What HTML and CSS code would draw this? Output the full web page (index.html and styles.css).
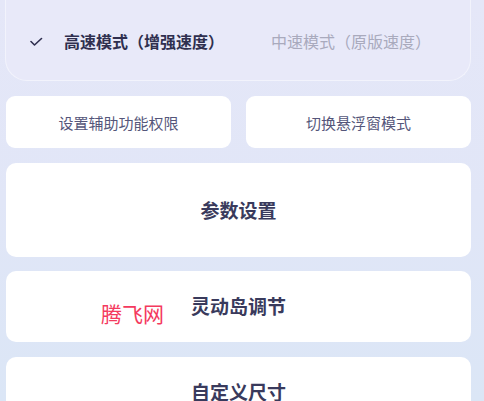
FILE: index.html
```html
<!DOCTYPE html>
<html lang="zh-CN">
<head>
<meta charset="utf-8">
<title>设置</title>
<link rel="stylesheet" href="styles.css">
</head>
<body>
<div class="page">
  <div class="mode-card">
    <div class="mode-row">
      <div class="mode-item active">
        <svg class="check" width="14" height="10" viewBox="0 0 14 10"><path d="M1 4.5 L4.5 8 L11.5 1.5" fill="none" stroke="#2f2f4f" stroke-width="1.6" stroke-linecap="round" stroke-linejoin="round"/></svg>
        <span>高速模式（增强速度）</span>
      </div>
      <div class="mode-item inactive"><span>中速模式（原版速度）</span></div>
    </div>
  </div>
  <div class="btn-row">
    <div class="btn">设置辅助功能权限</div>
    <div class="btn">切换悬浮窗模式</div>
  </div>
  <div class="card card-tall">参数设置</div>
  <div class="card card-mid">灵动岛调节<span class="watermark">腾飞网</span></div>
  <div class="card card-last">自定义尺寸</div>
</div>
</body>
</html>
```

FILE: styles.css
```css
html, body {
  margin: 0;
  padding: 0;
}
body {
  width: 484px;
  height: 401px;
  overflow: hidden;
  background: linear-gradient(180deg, #e5e7f8 0%, #e1e6f7 50%, #dbe6f6 100%);
  font-family: "Noto Sans CJK SC", "Noto Sans", sans-serif;
}
.page {
  padding: 0 13px 0 6px;
}
.mode-card {
  margin: -20px 0 0 -1px;
  height: 101px;
  box-sizing: border-box;
  border: 1px solid #f2f3fc;
  border-top: none;
  border-radius: 0 0 22px 22px;
  background: #e8e9f9;
  padding-top: 51px;
}
.mode-row {
  display: flex;
  align-items: center;
  height: 20px;
}
.mode-item {
  display: flex;
  align-items: center;
  font-size: 16px;
  line-height: 20px;
}
.mode-item.active {
  color: #2f2f4f;
  font-weight: 700;
  padding-left: 24px;
}
.check {
  margin-right: 20px;
  margin-top: 1px;
}
.mode-item.inactive {
  color: #a9aabd;
  margin-left: 47px;
}
.btn-row {
  display: flex;
  gap: 15px;
  margin-top: 15px;
}
.btn {
  flex: 1;
  height: 52px;
  background: #ffffff;
  border-radius: 9px;
  display: flex;
  align-items: center;
  justify-content: center;
  font-size: 15px;
  color: #55567a;
}
.card {
  position: relative;
  box-sizing: border-box;
  padding-bottom: 2px;
  background: #ffffff;
  border-radius: 10px;
  display: flex;
  align-items: center;
  justify-content: center;
  font-size: 19px;
  font-weight: 700;
  color: #393a5c;
}
.card-tall {
  height: 94px;
  margin-top: 15px;
}
.card-mid {
  height: 71px;
  margin-top: 14px;
}
.card-last {
  height: 71px;
  margin-top: 15px;
}
.watermark {
  position: absolute;
  left: 95px;
  top: 29px;
  font-size: 21px;
  font-weight: 400;
  line-height: 26px;
  color: #f43a5e;
  font-family: "Noto Sans CJK SC", serif;
}
```
